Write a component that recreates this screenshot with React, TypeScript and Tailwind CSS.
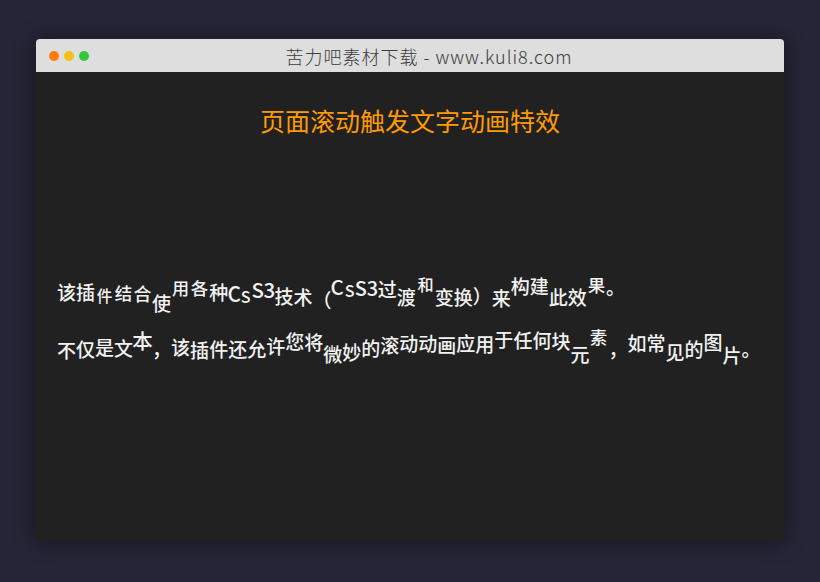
const font = { fontFamily: '"Noto Sans CJK SC", "Noto Sans", sans-serif' };

type Glyph = [string, string];

// frame of the scroll animation: each character sits at its own offset / scale
const lineOne: Glyph[] = [
    ['该', ''],
    ['插', ''],
    ['件', 'translate-y-[3px] scale-[0.82]'],
    ['结', 'translate-y-[1px] scale-[0.92]'],
    ['合', 'translate-y-[1px] scale-[0.95]'],
    ['使', 'translate-y-[11px]'],
    ['用', '-translate-y-[4px] scale-[0.9]'],
    ['各', '-translate-y-[4px] scale-[0.92]'],
    ['种', ''],
    ['C', 'translate-y-[1px] scale-[1.1]'],
    ['S', 'translate-y-[4px] scale-[0.85]'],
    ['S', '-translate-y-[3px] scale-[1.08]'],
    ['3', '-translate-y-[3px] scale-[1.08]'],
    ['技', 'translate-y-[4px]'],
    ['术', 'translate-y-[5px]'],
    ['（', 'translate-y-[8px]'],
    ['C', '-translate-y-[6px] scale-[1.08]'],
    ['S', '-translate-y-[2px] scale-[0.85]'],
    ['S', '-translate-y-[4px] scale-[1.05]'],
    ['3', '-translate-y-[4px] scale-[1.05]'],
    ['过', '-translate-y-[3px]'],
    ['渡', 'translate-y-[5px]'],
    ['和', '-translate-y-[8px] scale-[0.85]'],
    ['变', 'translate-y-[5px]'],
    ['换', 'translate-y-[5px]'],
    ['）', 'translate-y-[4px]'],
    ['来', 'translate-y-[6px]'],
    ['构', '-translate-y-[6px]'],
    ['建', '-translate-y-[6px]'],
    ['此', 'translate-y-[5px]'],
    ['效', 'translate-y-[5px]'],
    ['果', '-translate-y-[7px] scale-[0.92]'],
    ['。', '-translate-y-[5px]'],
];

const lineTwo: Glyph[] = [
    ['不', 'translate-y-[2px]'],
    ['仅', 'translate-y-[1px]'],
    ['是', '-translate-y-[1px]'],
    ['文', ''],
    ['本', '-translate-y-[8px] scale-[1.08]'],
    ['，', 'translate-y-[1px]'],
    ['该', '-translate-y-[1px]'],
    ['插', 'translate-y-[2px]'],
    ['件', 'translate-y-[1px]'],
    ['还', 'translate-y-[1px]'],
    ['允', 'translate-y-[1px]'],
    ['许', '-translate-y-[2px]'],
    ['您', '-translate-y-[7px]'],
    ['将', '-translate-y-[6px]'],
    ['微', 'translate-y-[6px]'],
    ['妙', 'translate-y-[4px]'],
    ['的', ''],
    ['滚', '-translate-y-[3px]'],
    ['动', '-translate-y-[5px]'],
    ['动', '-translate-y-[5px]'],
    ['画', '-translate-y-[3px]'],
    ['应', '-translate-y-[5px]'],
    ['用', '-translate-y-[4px]'],
    ['于', '-translate-y-[9px]'],
    ['任', '-translate-y-[8px]'],
    ['何', '-translate-y-[8px]'],
    ['块', '-translate-y-[7px]'],
    ['元', 'translate-y-[6px]'],
    ['素', '-translate-y-[11px] scale-[0.92]'],
    ['，', 'translate-y-[1px]'],
    ['如', '-translate-y-[5px]'],
    ['常', '-translate-y-[5px]'],
    ['见', 'translate-y-[4px]'],
    ['的', 'translate-y-[1px]'],
    ['图', '-translate-y-[6px]'],
    ['片', 'translate-y-[7px]'],
    ['。', 'translate-y-[1px]'],
];

function AnimatedLine({ glyphs }: { glyphs: Glyph[] }) {
    return (
        <p className="flex h-[40px] items-center whitespace-nowrap text-[19px] leading-[40px] font-medium text-[#f2f2f2]">
            {glyphs.map(([c, cls], i) => (
                <span key={i} className={`inline-block ${cls}`}>
                    {c}
                </span>
            ))}
        </p>
    );
}

export default function App() {
    return (
        <div
            className="flex min-h-[582px] w-full justify-center bg-[#262537] pt-[39px]"
            style={font}
        >
            <div className="flex h-[502px] w-[748px] flex-col overflow-hidden rounded-t-[4px] shadow-[0_0_22px_rgba(0,0,0,0.45)]">
                <div className="flex h-[33px] shrink-0 items-center bg-[#dedede] px-[12px]">
                    <div className="flex w-[60px] items-center gap-[5px] pl-[1px]">
                        <span className="h-[10px] w-[10px] rounded-full bg-[#ff7c0b]" />
                        <span className="h-[10px] w-[10px] rounded-full bg-[#f2c117]" />
                        <span className="h-[10px] w-[10px] rounded-full bg-[#2ec83a]" />
                    </div>
                    <div className="flex-1 pr-[22px] text-center text-[18px] leading-none font-light tracking-[1px] text-[#3c3c3c]">
                        苦力吧素材下载 - www.kuli8.com
                    </div>
                </div>
                <div className="flex flex-1 flex-col bg-[#212121] px-[21px]">
                    <h1 className="mt-[33px] text-center text-[25px] leading-[30px] text-[#ff9a05]">
                        页面滚动触发文字动画特效
                    </h1>
                    <div className="mt-[137px] flex flex-col gap-[16px]">
                        <AnimatedLine glyphs={lineOne} />
                        <AnimatedLine glyphs={lineTwo} />
                    </div>
                </div>
            </div>
        </div>
    );
}
